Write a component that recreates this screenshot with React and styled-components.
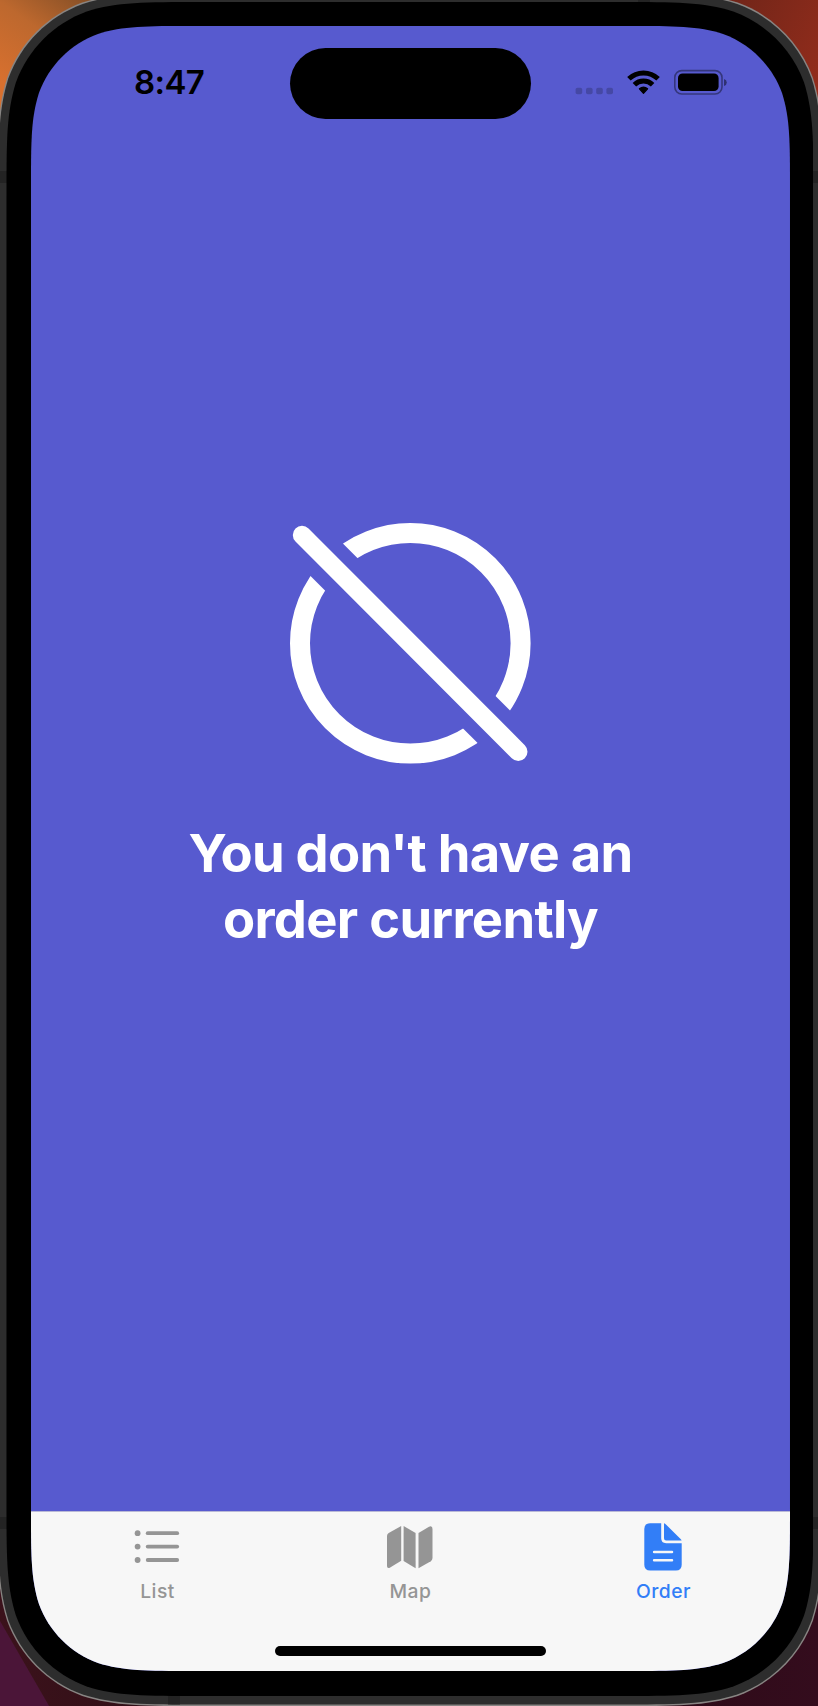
import React from "react";
import styled, { createGlobalStyle } from "styled-components";

// Outline of a rounded rectangle with continuous-curvature corners.
const squircle = (w, h, r) => {
  const a = 1.52866 * r;
  const b = 1.08849 * r;
  const c = 0.86841 * r;
  const d = 0.63149 * r;
  const e = 0.07491 * r;
  const f = 0.37282 * r;
  const g = 0.16906 * r;
  return [
    `M${a} 0H${w - a}`,
    `C${w - b} 0 ${w - c} 0 ${w - d} ${e}`,
    `C${w - f} ${g} ${w - g} ${f} ${w - e} ${d}`,
    `C${w} ${c} ${w} ${b} ${w} ${a}V${h - a}`,
    `C${w} ${h - b} ${w} ${h - c} ${w - e} ${h - d}`,
    `C${w - g} ${h - f} ${w - f} ${h - g} ${w - d} ${h - e}`,
    `C${w - c} ${h} ${w - b} ${h} ${w - a} ${h}H${a}`,
    `C${b} ${h} ${c} ${h} ${d} ${h - e}`,
    `C${f} ${h - g} ${g} ${h - f} ${e} ${h - d}`,
    `C0 ${h - c} 0 ${h - b} 0 ${h - a}V${a}`,
    `C0 ${b} 0 ${c} ${e} ${d}`,
    `C${g} ${f} ${f} ${g} ${d} ${e}`,
    `C${c} 0 ${b} 0 ${a} 0Z`,
  ].join(" ");
};

const GlobalStyle = createGlobalStyle`
  body { margin: 0; overflow: hidden; font-family: Inter, "Liberation Sans", sans-serif; }
  * { box-sizing: border-box; }
`;

const Desktop = styled.div`
  display: flex;
  width: 818px;
  height: 1706px;
  overflow: hidden;
  background:
    linear-gradient(60deg, #4b1538 0 42px, transparent 43px) 0 100% / 50px 86px no-repeat,
    linear-gradient(35deg, #d8702f 40px, #bd682e 105px, #7a4a25 170px) 0 0 / 110px 130px no-repeat,
    linear-gradient(115deg, #6b2418, #972d1c) 100% 0 / 110px 130px no-repeat,
    linear-gradient(90deg, #3b121b, #22090f 50%, #340c1d);
`;

const Shell = styled.div`
  flex: none;
  width: ${(p) => p.$w}px;
  height: ${(p) => p.$h}px;
  padding: ${(p) => p.$pad};
  background: ${(p) => p.$bg};
  clip-path: path("${(p) => squircle(p.$w, p.$h, p.$r)}");
`;

const Edge = styled(Shell)`
  margin: -7.5px 0 0 -3px;
`;

const Band = "#232323";
const frameFill = `
  linear-gradient(${Band}, ${Band}) 0 177px / 100% 12px no-repeat,
  linear-gradient(${Band}, ${Band}) 0 1523px / 100% 12px no-repeat,
  linear-gradient(${Band}, ${Band}) 170px 100% / 12px 20px no-repeat,
  linear-gradient(${Band}, ${Band}) 640px 0 / 12px 20px no-repeat,
  #2d2d2d`;

const Screen = styled(Shell)`
  display: flex;
  flex-direction: column;
`;

const StatusBar = styled.header`
  display: flex;
  flex: none;
  height: 93px;
  padding: 21.5px 63px 0 103px;
`;

const Clock = styled.div`
  width: 156px;
  padding-top: 15px;
  font-size: 33px;
  font-weight: 600;
  line-height: 40px;
  letter-spacing: -0.6px;
  color: #000;
`;

const Island = styled.div`
  width: 241.5px;
  height: 71px;
  margin-top: 0.5px;
  border-radius: 36px;
  background: #000;
`;

const Indicators = styled.div`
  display: flex;
  flex: 1;
  justify-content: flex-end;
  margin-right: -1px;
  padding-top: 22px;
  height: 48px;
`;

const Content = styled.main`
  display: flex;
  flex: 1;
  flex-direction: column;
  align-items: center;
  gap: 56px;
  padding-top: 403px;
`;

const Message = styled.h1`
  margin: 0;
  width: 500px;
  font-size: 52.5px;
  font-weight: 700;
  line-height: 66px;
  letter-spacing: -0.7px;
  text-align: center;
  color: #fff;
`;

const TabBar = styled.nav`
  flex: none;
  height: 160.3px;
  border-top: 1px solid #b9b9d6;
  background: #f7f7f7;
`;

const Tabs = styled.div`
  display: grid;
  grid-template-columns: repeat(3, 1fr);
  height: 134px;
`;

const Tab = styled.div`
  display: flex;
  flex-direction: column;
  align-items: center;
  gap: 6.7px;
  padding-top: 10.5px;
  color: ${(p) => (p.$active ? "#327ef7" : "#959595")};
`;

const TabLabel = styled.span`
  font-size: 19.3px;
  font-weight: ${(p) => (p.$active ? 500 : 450)};
  line-height: 24px;
  letter-spacing: 0.5px;
`;

const HomeIndicator = styled.div`
  width: 270.5px;
  height: 10px;
  margin: 0 auto;
  border-radius: 5px;
  background: #000;
`;

const StatusIcons = () => (
  <svg width="154" height="26" viewBox="574 69 154 26">
    <g fill="#000" fillOpacity="0.2">
      {[575.6, 586, 596.2, 606.4].map((x) => (
        <rect key={x} x={x} y="87.8" width="6.6" height="6.4" rx="1.8" />
      ))}
    </g>
    <g fill="none" stroke="#000" strokeWidth="5">
      <path d="M628.9 78.8A21.1 21.1 0 0 1 658.1 78.8" />
      <path d="M634.4 84.7A13 13 0 0 1 652.6 84.7" />
    </g>
    <path
      d="M643.5 93.3L639.4 88.8Q643.5 85.4 647.6 88.8Z"
      stroke="#000"
      strokeWidth="1.2"
      strokeLinejoin="round"
    />
    <rect x="674.8" y="70.6" width="47.2" height="23.4" rx="7" fill="none" stroke="#000" strokeOpacity="0.4" strokeWidth="1.6" />
    <rect x="678" y="73.5" width="40.6" height="17.6" rx="4.6" />
    <path d="M724 79Q726.8 79.8 726.8 82.4T724 86Z" fillOpacity="0.45" />
  </svg>
);

const EmptyIcon = () => (
  <svg width="242" height="242" viewBox="-121.3 -121.3 242 242">
    <mask id="gap" maskUnits="userSpaceOnUse" x="-122" y="-122" width="244" height="244">
      <rect x="-122" y="-122" width="244" height="244" fill="#fff" />
      <path d="M-140 -140L140 140" stroke="#000" strokeWidth="45.8" />
    </mask>
    <circle r="110.3" fill="none" stroke="#fff" strokeWidth="20" mask="url(#gap)" />
    <path d="M-108.3 -108.3L108 108.4" stroke="#fff" strokeWidth="18.4" strokeLinecap="round" />
  </svg>
);

const ListIcon = () => (
  <svg width="50" height="50" viewBox="-0.4 0 50 50" fill="currentColor">
    {[11.2, 24.6, 38].map((y) => (
      <React.Fragment key={y}>
        <circle cx="5.2" cy={y} r="2.9" />
        <rect x="13.4" y={y - 1.9} width="33.3" height="3.8" rx="1.9" />
      </React.Fragment>
    ))}
  </svg>
);

const MapIcon = () => (
  <svg width="50" height="50" viewBox="-0.4 0 50 50" fill="currentColor">
    <path d="M15.8 4V38.8L4.4 45.7Q1.6 46.7 1.6 44V14Q1.6 11.9 3.3 10.9Z" />
    <path d="M18.2 4L30.2 11V46.2L18.2 39.1Z" />
    <path d="M33.1 11L43.6 4.7Q47.1 3.3 47.1 7V36Q47.1 38.1 45.4 39.2L33.1 46.2Z" />
  </svg>
);

const OrderIcon = () => (
  <svg width="50" height="50" viewBox="-0.4 0 50 50" fill="currentColor">
    <path d="M11.8 1.2H22.8V16.3Q22.8 21.2 27.7 21.2H43.3V42.8Q43.3 48.6 37.5 48.6H11.8Q5.9 48.6 5.9 42.8V7Q5.9 1.2 11.8 1.2Z" />
    <path d="M25.6 1.3Q26.7 1.6 27.8 2.7L42.2 16.9Q43 17.8 43.2 18.6H27.8Q25.6 18.6 25.6 16.3Z" />
    <path d="M15.7 30H33.6M15.7 38.2H33.6" stroke="#f7f7f7" strokeWidth="2.5" strokeLinecap="round" />
  </svg>
);

const tabs = [
  { label: "List", Icon: ListIcon },
  { label: "Map", Icon: MapIcon },
  { label: "Order", Icon: OrderIcon, active: true },
];

export default function App() {
  return (
    <>
      <GlobalStyle />
      <Desktop>
        <Edge $w={826} $h={1713.5} $r={135} $pad="1.4px" $bg="#888583">
          <Shell $w={823.2} $h={1710.7} $r={133.6} $pad="8.1px" $bg={frameFill}>
            <Shell $w={807} $h={1694} $r={127} $pad="24px 24.5px" $bg="#000">
              <Screen $w={759} $h={1645} $r={106} $pad="0" $bg="#575acf">
                <StatusBar>
                  <Clock>8:47</Clock>
                  <Island />
                  <Indicators>
                    <StatusIcons />
                  </Indicators>
                </StatusBar>
                <Content>
                  <EmptyIcon />
                  <Message>
                    You don't have an
                    <br />
                    order currently
                  </Message>
                </Content>
                <TabBar>
                  <Tabs>
                    {tabs.map(({ label, Icon, active }) => (
                      <Tab key={label} $active={active}>
                        <Icon />
                        <TabLabel $active={active}>{label}</TabLabel>
                      </Tab>
                    ))}
                  </Tabs>
                  <HomeIndicator />
                </TabBar>
              </Screen>
            </Shell>
          </Shell>
        </Edge>
      </Desktop>
    </>
  );
}
